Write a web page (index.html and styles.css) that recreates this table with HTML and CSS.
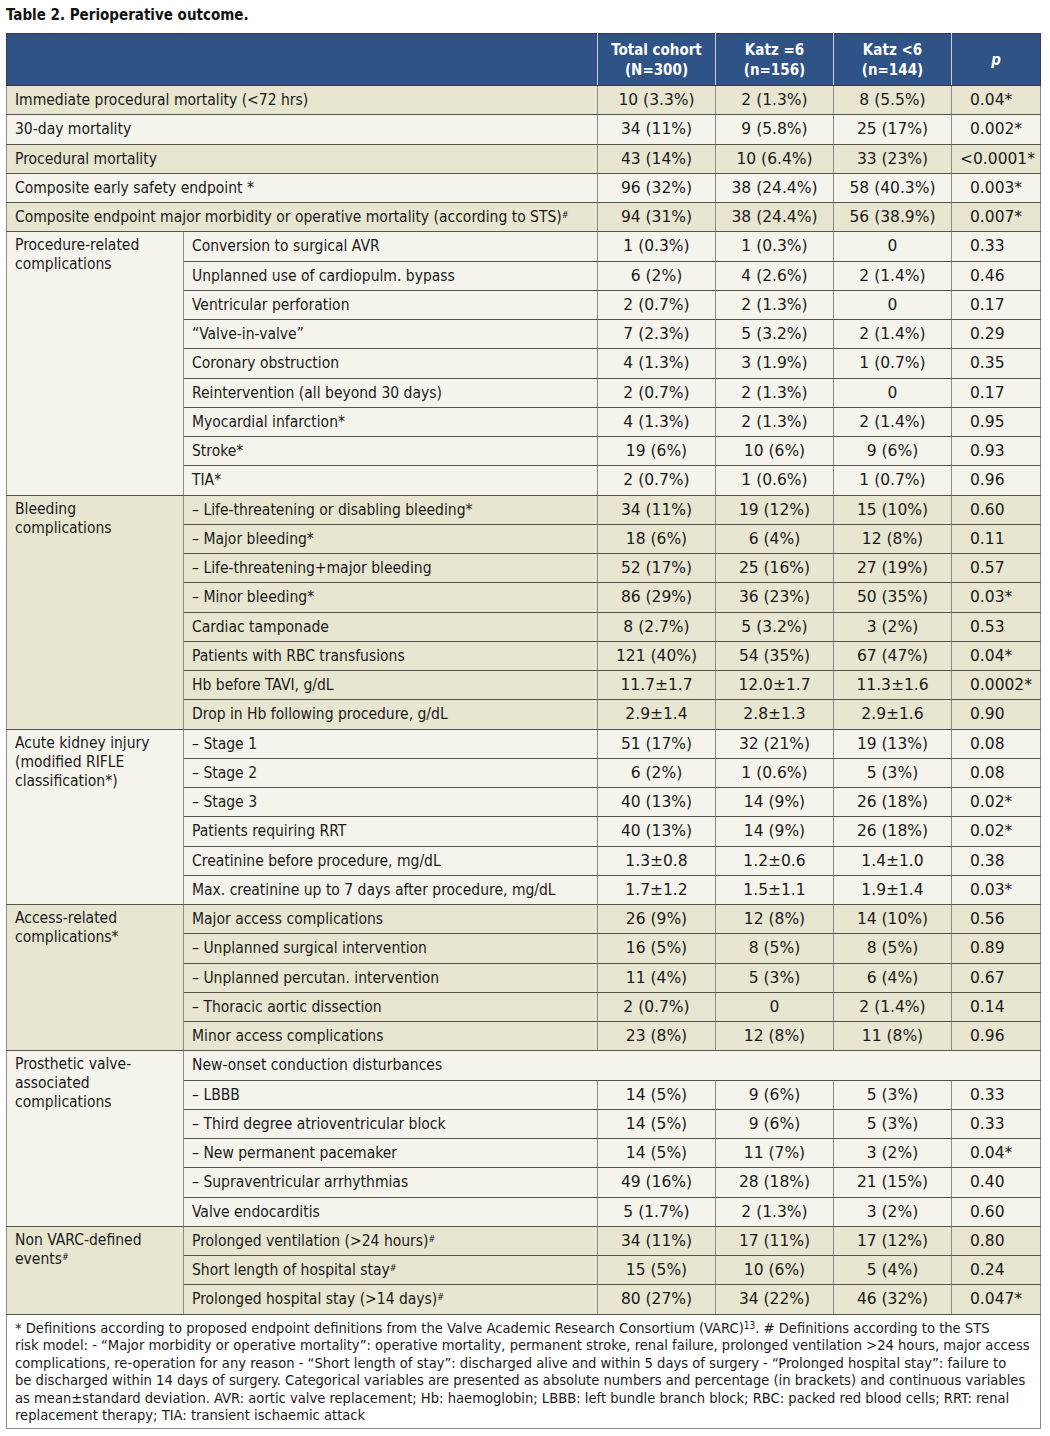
FILE: index.html
```html
<!DOCTYPE html>
<html>
<head>
<meta charset="utf-8">
<link rel="stylesheet" href="styles.css">
</head>
<body>
<div class="page">
<h1 class="title">Table 2. Perioperative outcome.</h1>
<table class="outcome">
<colgroup>
<col class="c-grp"><col class="c-sub"><col class="c-num"><col class="c-num"><col class="c-num"><col class="c-p">
</colgroup>
<thead>
<tr><th colspan="2"></th><th>Total cohort<br>(N=300)</th><th>Katz =6<br>(n=156)</th><th>Katz &lt;6<br>(n=144)</th><th class="pv"><i>p</i></th></tr>
</thead>
<tbody>
<tr class="tan"><td class="lab" colspan="2">Immediate procedural mortality (&lt;72 hrs)</td><td class="n">10 (3.3%)</td><td class="n">2 (1.3%)</td><td class="n">8 (5.5%)</td><td class="p">0.04*</td></tr>
<tr class="lt"><td class="lab" colspan="2">30-day mortality</td><td class="n">34 (11%)</td><td class="n">9 (5.8%)</td><td class="n">25 (17%)</td><td class="p">0.002*</td></tr>
<tr class="tan"><td class="lab" colspan="2">Procedural mortality</td><td class="n">43 (14%)</td><td class="n">10 (6.4%)</td><td class="n">33 (23%)</td><td class="p lt0">&lt;0.0001*</td></tr>
<tr class="lt"><td class="lab" colspan="2">Composite early safety endpoint *</td><td class="n">96 (32%)</td><td class="n">38 (24.4%)</td><td class="n">58 (40.3%)</td><td class="p">0.003*</td></tr>
<tr class="tan"><td class="lab" colspan="2">Composite endpoint major morbidity or operative mortality (according to STS)<sup>#</sup></td><td class="n">94 (31%)</td><td class="n">38 (24.4%)</td><td class="n">56 (38.9%)</td><td class="p">0.007*</td></tr>
</tbody>
<tbody class="lt">
<tr><td class="grp" rowspan="9">Procedure-related complications</td><td class="lab">Conversion to surgical AVR</td><td class="n">1 (0.3%)</td><td class="n">1 (0.3%)</td><td class="n">0</td><td class="p">0.33</td></tr>
<tr><td class="lab">Unplanned use of cardiopulm. bypass</td><td class="n">6 (2%)</td><td class="n">4 (2.6%)</td><td class="n">2 (1.4%)</td><td class="p">0.46</td></tr>
<tr><td class="lab">Ventricular perforation</td><td class="n">2 (0.7%)</td><td class="n">2 (1.3%)</td><td class="n">0</td><td class="p">0.17</td></tr>
<tr><td class="lab">“Valve-in-valve”</td><td class="n">7 (2.3%)</td><td class="n">5 (3.2%)</td><td class="n">2 (1.4%)</td><td class="p">0.29</td></tr>
<tr><td class="lab">Coronary obstruction</td><td class="n">4 (1.3%)</td><td class="n">3 (1.9%)</td><td class="n">1 (0.7%)</td><td class="p">0.35</td></tr>
<tr><td class="lab">Reintervention (all beyond 30 days)</td><td class="n">2 (0.7%)</td><td class="n">2 (1.3%)</td><td class="n">0</td><td class="p">0.17</td></tr>
<tr><td class="lab">Myocardial infarction*</td><td class="n">4 (1.3%)</td><td class="n">2 (1.3%)</td><td class="n">2 (1.4%)</td><td class="p">0.95</td></tr>
<tr><td class="lab">Stroke*</td><td class="n">19 (6%)</td><td class="n">10 (6%)</td><td class="n">9 (6%)</td><td class="p">0.93</td></tr>
<tr><td class="lab">TIA*</td><td class="n">2 (0.7%)</td><td class="n">1 (0.6%)</td><td class="n">1 (0.7%)</td><td class="p">0.96</td></tr>
</tbody>
<tbody class="tan">
<tr><td class="grp" rowspan="8">Bleeding complications</td><td class="lab">– Life-threatening or disabling bleeding*</td><td class="n">34 (11%)</td><td class="n">19 (12%)</td><td class="n">15 (10%)</td><td class="p">0.60</td></tr>
<tr><td class="lab">– Major bleeding*</td><td class="n">18 (6%)</td><td class="n">6 (4%)</td><td class="n">12 (8%)</td><td class="p">0.11</td></tr>
<tr><td class="lab">– Life-threatening+major bleeding</td><td class="n">52 (17%)</td><td class="n">25 (16%)</td><td class="n">27 (19%)</td><td class="p">0.57</td></tr>
<tr><td class="lab">– Minor bleeding*</td><td class="n">86 (29%)</td><td class="n">36 (23%)</td><td class="n">50 (35%)</td><td class="p">0.03*</td></tr>
<tr><td class="lab">Cardiac tamponade</td><td class="n">8 (2.7%)</td><td class="n">5 (3.2%)</td><td class="n">3 (2%)</td><td class="p">0.53</td></tr>
<tr><td class="lab">Patients with RBC transfusions</td><td class="n">121 (40%)</td><td class="n">54 (35%)</td><td class="n">67 (47%)</td><td class="p">0.04*</td></tr>
<tr><td class="lab">Hb before TAVI, g/dL</td><td class="n">11.7±1.7</td><td class="n">12.0±1.7</td><td class="n">11.3±1.6</td><td class="p">0.0002*</td></tr>
<tr><td class="lab">Drop in Hb following procedure, g/dL</td><td class="n">2.9±1.4</td><td class="n">2.8±1.3</td><td class="n">2.9±1.6</td><td class="p">0.90</td></tr>
</tbody>
<tbody class="lt">
<tr><td class="grp" rowspan="6">Acute kidney injury (modified RIFLE classification*)</td><td class="lab">– Stage 1</td><td class="n">51 (17%)</td><td class="n">32 (21%)</td><td class="n">19 (13%)</td><td class="p">0.08</td></tr>
<tr><td class="lab">– Stage 2</td><td class="n">6 (2%)</td><td class="n">1 (0.6%)</td><td class="n">5 (3%)</td><td class="p">0.08</td></tr>
<tr><td class="lab">– Stage 3</td><td class="n">40 (13%)</td><td class="n">14 (9%)</td><td class="n">26 (18%)</td><td class="p">0.02*</td></tr>
<tr><td class="lab">Patients requiring RRT</td><td class="n">40 (13%)</td><td class="n">14 (9%)</td><td class="n">26 (18%)</td><td class="p">0.02*</td></tr>
<tr><td class="lab">Creatinine before procedure, mg/dL</td><td class="n">1.3±0.8</td><td class="n">1.2±0.6</td><td class="n">1.4±1.0</td><td class="p">0.38</td></tr>
<tr><td class="lab">Max. creatinine up to 7 days after procedure, mg/dL</td><td class="n">1.7±1.2</td><td class="n">1.5±1.1</td><td class="n">1.9±1.4</td><td class="p">0.03*</td></tr>
</tbody>
<tbody class="tan">
<tr><td class="grp" rowspan="5">Access-related complications*</td><td class="lab">Major access complications</td><td class="n">26 (9%)</td><td class="n">12 (8%)</td><td class="n">14 (10%)</td><td class="p">0.56</td></tr>
<tr><td class="lab">– Unplanned surgical intervention</td><td class="n">16 (5%)</td><td class="n">8 (5%)</td><td class="n">8 (5%)</td><td class="p">0.89</td></tr>
<tr><td class="lab">– Unplanned percutan. intervention</td><td class="n">11 (4%)</td><td class="n">5 (3%)</td><td class="n">6 (4%)</td><td class="p">0.67</td></tr>
<tr><td class="lab">– Thoracic aortic dissection</td><td class="n">2 (0.7%)</td><td class="n">0</td><td class="n">2 (1.4%)</td><td class="p">0.14</td></tr>
<tr><td class="lab">Minor access complications</td><td class="n">23 (8%)</td><td class="n">12 (8%)</td><td class="n">11 (8%)</td><td class="p">0.96</td></tr>
</tbody>
<tbody class="lt">
<tr><td class="grp" rowspan="6">Prosthetic valve-associated complications</td><td class="lab" colspan="5">New-onset conduction disturbances</td></tr>
<tr><td class="lab">– LBBB</td><td class="n">14 (5%)</td><td class="n">9 (6%)</td><td class="n">5 (3%)</td><td class="p">0.33</td></tr>
<tr><td class="lab">– Third degree atrioventricular block</td><td class="n">14 (5%)</td><td class="n">9 (6%)</td><td class="n">5 (3%)</td><td class="p">0.33</td></tr>
<tr><td class="lab">– New permanent pacemaker</td><td class="n">14 (5%)</td><td class="n">11 (7%)</td><td class="n">3 (2%)</td><td class="p">0.04*</td></tr>
<tr><td class="lab">– Supraventricular arrhythmias</td><td class="n">49 (16%)</td><td class="n">28 (18%)</td><td class="n">21 (15%)</td><td class="p">0.40</td></tr>
<tr><td class="lab">Valve endocarditis</td><td class="n">5 (1.7%)</td><td class="n">2 (1.3%)</td><td class="n">3 (2%)</td><td class="p">0.60</td></tr>
</tbody>
<tbody class="tan">
<tr><td class="grp" rowspan="3">Non VARC-defined events<sup>#</sup></td><td class="lab">Prolonged ventilation (&gt;24 hours)<sup>#</sup></td><td class="n">34 (11%)</td><td class="n">17 (11%)</td><td class="n">17 (12%)</td><td class="p">0.80</td></tr>
<tr><td class="lab">Short length of hospital stay<sup>#</sup></td><td class="n">15 (5%)</td><td class="n">10 (6%)</td><td class="n">5 (4%)</td><td class="p">0.24</td></tr>
<tr><td class="lab">Prolonged hospital stay (&gt;14 days)<sup>#</sup></td><td class="n">80 (27%)</td><td class="n">34 (22%)</td><td class="n">46 (32%)</td><td class="p">0.047*</td></tr>
</tbody>
<tfoot>
<tr><td class="note" colspan="6">* Definitions according to proposed endpoint definitions from the Valve Academic Research Consortium (VARC)<sup class="ref">13</sup>. # Definitions according to the STS<br>risk model: - “Major morbidity or operative mortality”: operative mortality, permanent stroke, renal failure, prolonged ventilation &gt;24 hours, major access<br>complications, re-operation for any reason - “Short length of stay”: discharged alive and within 5 days of surgery - “Prolonged hospital stay”: failure to<br>be discharged within 14 days of surgery. Categorical variables are presented as absolute numbers and percentage (in brackets) and continuous variables<br>as mean±standard deviation. AVR: aortic valve replacement; Hb: haemoglobin; LBBB: left bundle branch block; RBC: packed red blood cells; RRT: renal<br>replacement therapy; TIA: transient ischaemic attack</td></tr>
</tfoot>
</table>
</div>
</body>
</html>
```
FILE: styles.css
```css
html, body { margin: 0; padding: 0; background: #ffffff; }
.page { padding: 0 0 0 6px; width: 1034px; }
.title {
  margin: 0;
  height: 33px;
  box-sizing: border-box;
  padding-top: 5px;
  font-family: "DejaVu Sans Condensed", "Liberation Sans", sans-serif;
  font-stretch: condensed;
  font-weight: bold;
  font-size: 15px;
  line-height: 20px;
  color: #111;
}
.outcome {
  width: 1034px;
  border-collapse: collapse;
  table-layout: fixed;
  font-family: "DejaVu Sans Condensed", "Liberation Sans", sans-serif;
  font-stretch: condensed;
  font-size: 15.5px;
  color: #1a1a1a;
}
.c-grp { width: 177px; }
.c-sub { width: 414px; }
.c-num { width: 118px; }
.c-p { width: 89px; }
thead th {
  background: #2f5287;
  color: #fff;
  height: 51px;
  padding: 0;
  font-family: "DejaVu Sans Condensed", "Liberation Sans", sans-serif;
  font-stretch: condensed;
  font-weight: bold;
  font-size: 15px;
  line-height: 20px;
  text-align: center;
  border: 1px solid #3a3a3a;
  border-left-color: #c9cfdc;
  border-right-color: #c9cfdc;
}
thead th:first-child { border-left-color: #3a3a3a; }
thead th:last-child { border-right-color: #3a3a3a; }
.pv i { font-family: "DejaVu Sans", sans-serif; font-size: 15px; }
td {
  height: 29.26px;
  padding: 0 0 0 9px;
  border: 1px solid #8c8c84;
  border-top-color: #55554d;
  border-bottom-color: #55554d;
  white-space: nowrap;
  vertical-align: middle;
  box-sizing: border-box;
}
tr.tan td, tbody.tan td { background: #e8e5d0; }
tr.lt td, tbody.lt td { background: #f5f4ec; }
td.grp {
  vertical-align: top;
  white-space: normal;
  padding: 4px 30px 0 8px;
  line-height: 19px;
  border-bottom-color: #55554d;
}
td.lab { padding-left: 8px; }
td.n {
  padding: 0;
  text-align: center;
  font-family: "DejaVu Sans", sans-serif;
  font-stretch: normal;
  font-size: 15.5px;
}
td.p {
  padding-left: 18px;
  font-family: "DejaVu Sans", sans-serif;
  font-stretch: normal;
  font-size: 15.5px;
}
td.p.lt0 { padding-left: 8px; }
sup { font-size: 9px; vertical-align: 4px; line-height: 0; }
sup.ref { font-size: 10px; }
td.note {
  background: #fff;
  white-space: nowrap;
  padding: 4px 8px 4px 8px;
  font-size: 14.6px;
  line-height: 17.6px;
  height: auto;
  border: 1px solid #8c8c84;
  border-top-color: #55554d;
}
```
